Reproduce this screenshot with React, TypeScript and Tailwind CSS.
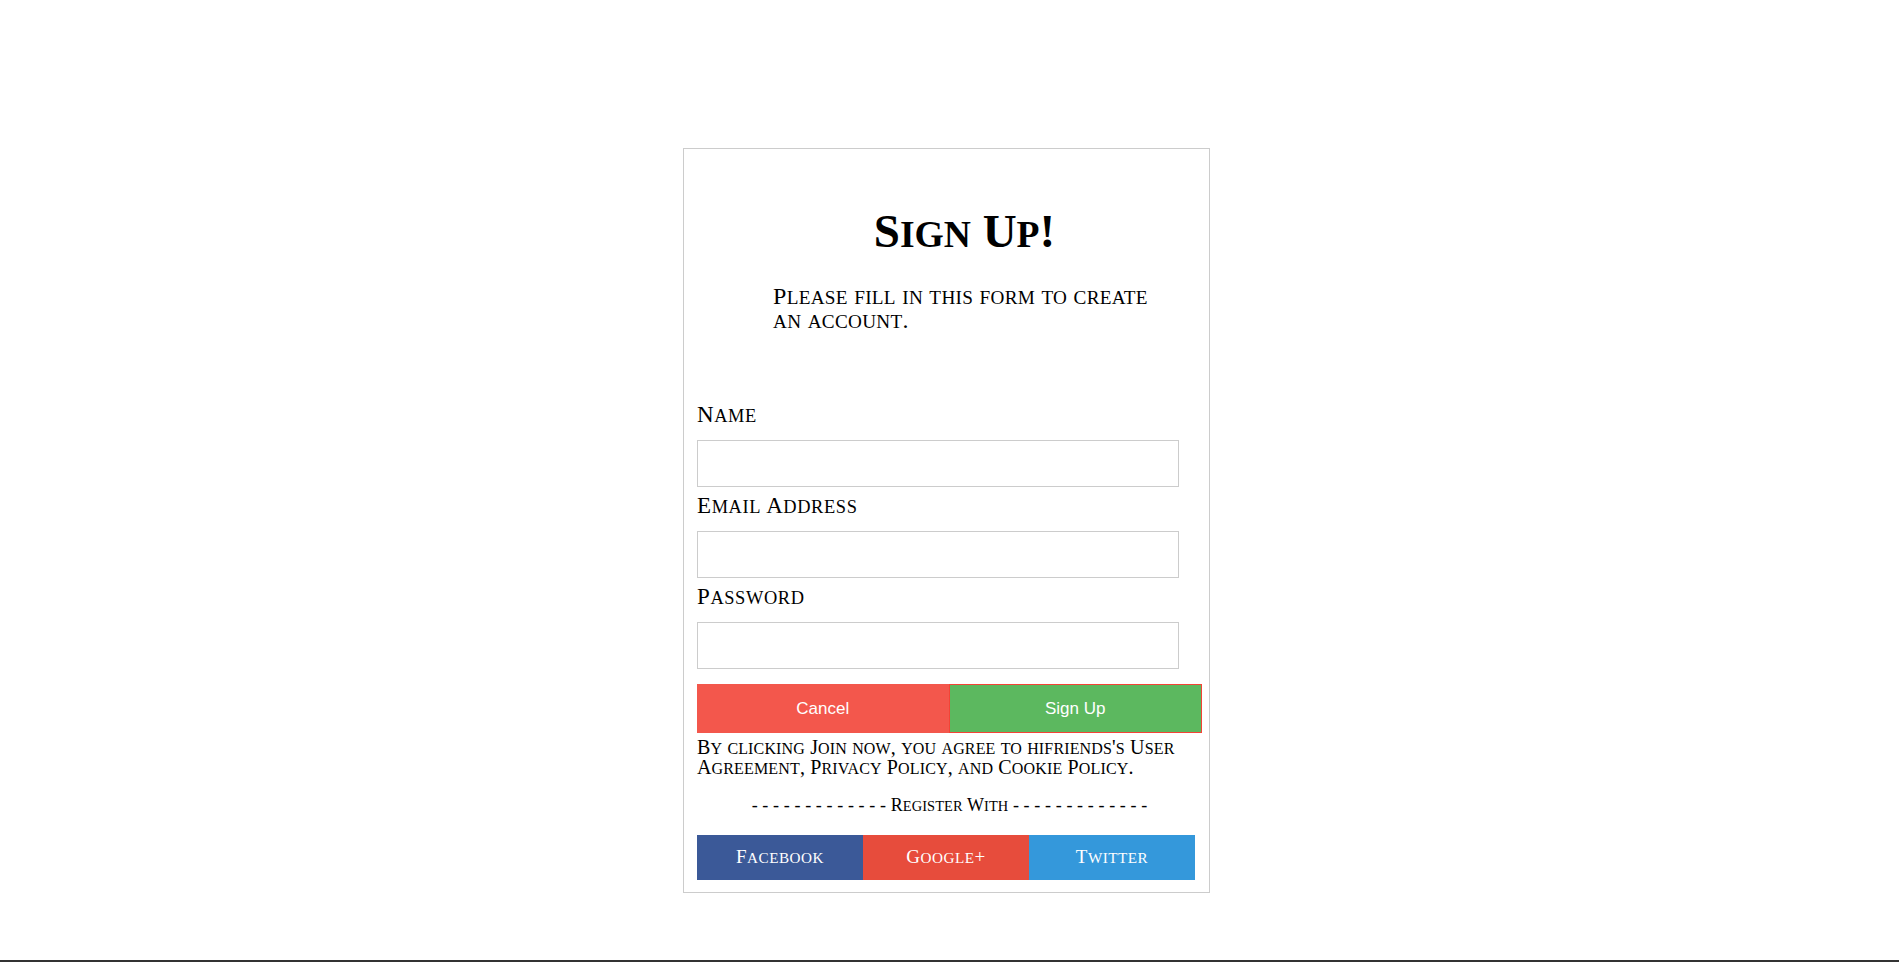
import React from "react"

/**
 * Trajan-style small caps: capitals stay full size, lowercase runs become
 * slightly smaller capitals.
 */
function Caps({ text }: { text: string }) {
  const parts = text.split(/([a-z]+)/)
  return (
    <>
      {parts.map((part, i) =>
        /[a-z]/.test(part) ? (
          <span key={i} className="text-[0.8em] uppercase leading-none">
            {part}
          </span>
        ) : (
          <React.Fragment key={i}>{part}</React.Fragment>
        )
      )}
    </>
  )
}

function Field({ label, type, first }: { label: string; type: string; first?: boolean }) {
  return (
    <div className={first ? "flex flex-col" : "mt-[6px] flex flex-col"}>
      <label className="text-[23px] leading-[26px] tracking-[0.6px] text-black">
        <Caps text={label} />
      </label>
      <input
        type={type}
        className="mt-[12px] h-[47px] w-[482px] border border-[#cccccc] bg-white px-3 outline-none"
      />
    </div>
  )
}

export default function App() {
  return (
    <div className="flex min-h-[1220px] flex-col bg-white font-['Liberation_Serif',serif]">
      <main className="flex h-[960px] items-start justify-center pr-[6px] pt-[148px]">
        <div className="flex w-[527px] flex-col border border-[#cccccc] px-[13px] pb-[12px] pt-[58px]">
          <h1 className="pl-[36px] text-center text-[47px] font-bold leading-[48px] text-black">
            <Caps text="Sign Up!" />
          </h1>
          <p className="ml-[76px] mt-[29px] w-[392px] text-[24px] leading-[24px] tracking-[0.3px] text-black">
            <Caps text="Please fill in this form to create an account." />
          </p>

          <div className="mt-[70px] flex flex-col">
            <Field label="Name" type="text" first />
            <Field label="Email Address" type="email" />
            <Field label="Password" type="password" />
          </div>

          <div className="mt-[15px] flex h-[49px] w-[505px] font-['Liberation_Sans',sans-serif] text-[17px] text-white">
            <button className="flex flex-1 items-center justify-center bg-[#f3574c]">Cancel</button>
            <button className="flex flex-1 items-center justify-center border border-[#f44336] bg-[#5cb85f]">
              Sign Up
            </button>
          </div>

          <p className="mt-[4px] w-[505px] text-[20px] leading-[20px] tracking-[0.15px] text-black">
            <Caps text="By clicking Join now, you agree to hifriends's User Agreement, Privacy Policy, and Cookie Policy." />
          </p>

          <p className="mt-[18px] w-[505px] text-center text-[18px] leading-[20px] tracking-[0.1px] text-black">
            - - - - - - - - - - - - - <Caps text="Register With" /> - - - - - - - - - - - - -
          </p>

          <div className="mt-[20px] grid h-[45px] w-[498px] grid-cols-3 text-[19px] tracking-[0.5px] text-white">
            <a className="flex items-center justify-center bg-[#3b5998]">
              <Caps text="Facebook" />
            </a>
            <a className="flex items-center justify-center bg-[#e74c3c]">
              <Caps text="Google+" />
            </a>
            <a className="flex items-center justify-center bg-[#3498db]">
              <Caps text="Twitter" />
            </a>
          </div>
        </div>
      </main>
      <footer className="h-[260px] bg-[#333333]" />
    </div>
  )
}
